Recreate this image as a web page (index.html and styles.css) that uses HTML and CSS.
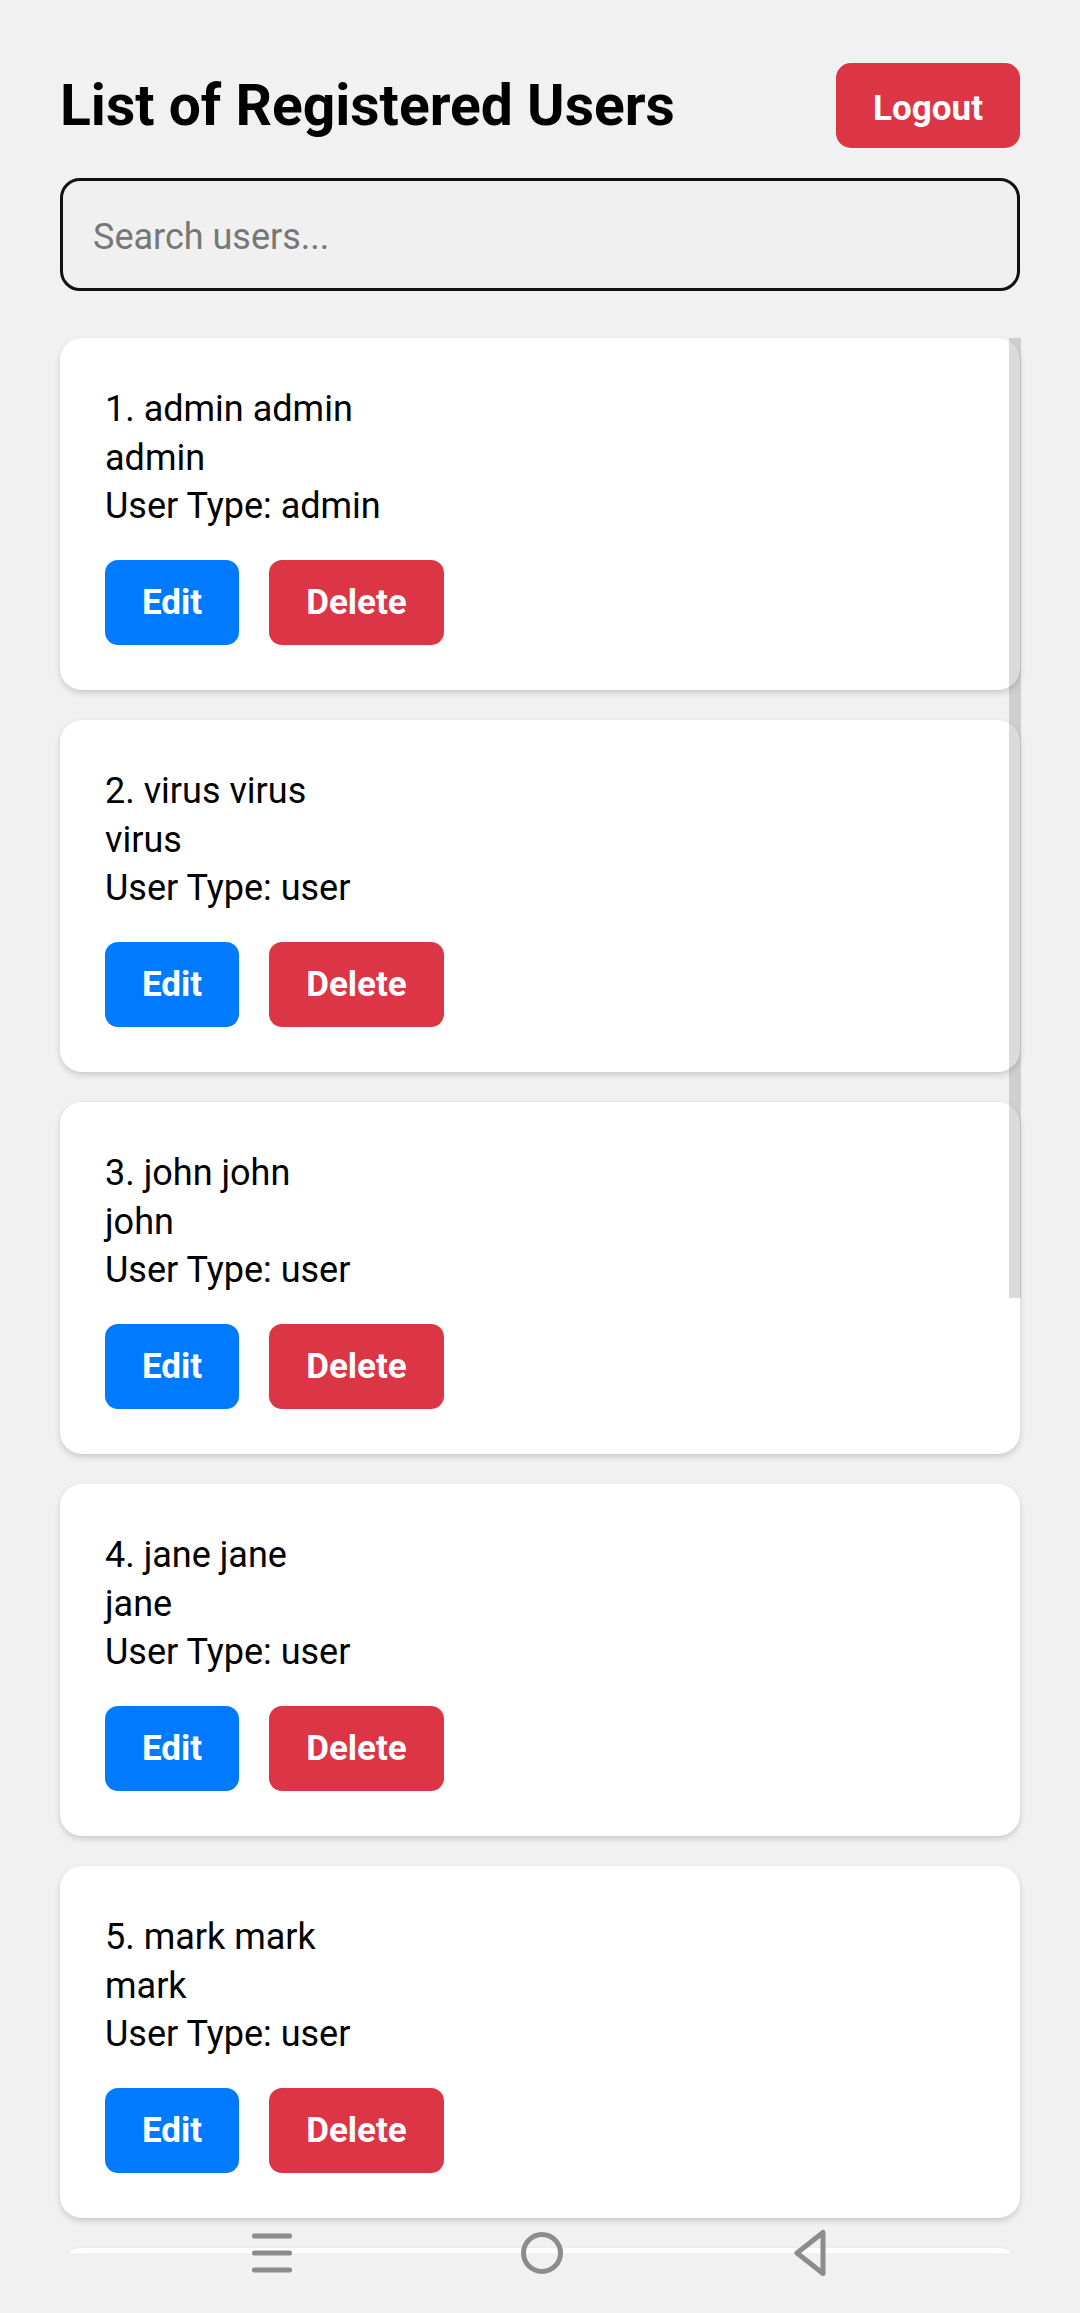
FILE: index.html
```html
<!DOCTYPE html>
<html lang="en">
<head>
<meta charset="utf-8">
<title>List of Registered Users</title>
<link rel="stylesheet" href="styles.css">
</head>
<body>
<div class="page">
  <header class="header">
    <h1 class="title">List of Registered Users</h1>
    <button class="btn btn-danger btn-logout">Logout</button>
  </header>
  <div class="search">
    <input class="search-input" type="text" placeholder="Search users...">
  </div>
  <div class="list-wrap">
    <div class="list">
      <div class="card">
        <div class="line">1. admin admin</div>
        <div class="line">admin</div>
        <div class="line">User Type: admin</div>
        <div class="actions"><button class="btn btn-primary">Edit</button><button class="btn btn-danger">Delete</button></div>
      </div>
      <div class="card">
        <div class="line">2. virus virus</div>
        <div class="line">virus</div>
        <div class="line">User Type: user</div>
        <div class="actions"><button class="btn btn-primary">Edit</button><button class="btn btn-danger">Delete</button></div>
      </div>
      <div class="card">
        <div class="line">3. john john</div>
        <div class="line">john</div>
        <div class="line">User Type: user</div>
        <div class="actions"><button class="btn btn-primary">Edit</button><button class="btn btn-danger">Delete</button></div>
      </div>
      <div class="card">
        <div class="line">4. jane jane</div>
        <div class="line">jane</div>
        <div class="line">User Type: user</div>
        <div class="actions"><button class="btn btn-primary">Edit</button><button class="btn btn-danger">Delete</button></div>
      </div>
      <div class="card">
        <div class="line">5. mark mark</div>
        <div class="line">mark</div>
        <div class="line">User Type: user</div>
        <div class="actions"><button class="btn btn-primary">Edit</button><button class="btn btn-danger">Delete</button></div>
      </div>
      <div class="card card-peek" aria-hidden="true"></div>
    </div>
    <div class="scroll-thumb"></div>
  </div>
</div>
<nav class="sysnav">
  <svg class="nav-icon" width="44" height="44" viewBox="0 0 44 44">
    <rect x="2" y="2.5" width="40" height="5" rx="2" fill="#8c8c8c"/>
    <rect x="2" y="19.5" width="40" height="5" rx="2" fill="#8c8c8c"/>
    <rect x="2" y="36.5" width="40" height="5" rx="2" fill="#8c8c8c"/>
  </svg>
  <svg class="nav-icon" width="46" height="46" viewBox="0 0 46 46">
    <circle cx="23" cy="23" r="18.5" fill="none" stroke="#8c8c8c" stroke-width="5"/>
  </svg>
  <svg class="nav-icon" width="40" height="48" viewBox="0 0 40 48">
    <path d="M33 3.5 L33 44.5 L7 24 Z" fill="none" stroke="#8c8c8c" stroke-width="5" stroke-linejoin="round"/>
  </svg>
</nav>
</body>
</html>
```

FILE: styles.css
```css
html, body {
  margin: 0;
  padding: 0;
}

body {
  background: #f1f1f1;
  font-family: Roboto, "Noto Sans", "Liberation Sans", sans-serif;
  color: #000;
  width: 1080px;
  height: 2313px;
  overflow: hidden;
  position: relative;
}

.page {
  padding: 63px 60px 0 60px;
}

.header {
  display: flex;
  justify-content: space-between;
  align-items: center;
}

.title {
  margin: 0;
  font-size: 57px;
  font-weight: 700;
  line-height: 68px;
  letter-spacing: 0;
}

.btn {
  border: none;
  color: #fff;
  font-family: Roboto, "Noto Sans", "Liberation Sans", sans-serif;
  font-size: 35px;
  font-weight: 700;
  height: 85px;
  padding: 0 37px;
  border-radius: 13px;
  line-height: 85px;
  cursor: pointer;
}

.btn-danger {
  background: #dc3545;
}

.btn-primary {
  background: #007bff;
}

.btn-logout {
  padding: 0 37px;
  border-radius: 15px;
  padding-top: 3px;
}

.search {
  margin-top: 30px;
}

.search-input {
  display: block;
  width: 100%;
  box-sizing: border-box;
  height: 113px;
  border: 3px solid #111;
  border-radius: 20px;
  background: #f0f0f0;
  padding: 4px 30px 0 30px;
  font-family: Roboto, "Noto Sans", "Liberation Sans", sans-serif;
  font-size: 36px;
  color: #000;
  outline: none;
}

.search-input::placeholder {
  color: #777;
}

.list-wrap {
  position: relative;
  margin-top: 47px;
}

.list {
  display: flex;
  flex-direction: column;
  gap: 30.5px;
}

.card {
  background: #fff;
  border-radius: 22px;
  padding: 47px 45px 45px 45px;
  box-shadow: 0 3px 6px rgba(0, 0, 0, 0.16);
}

.card-peek {
  height: 300px;
  padding: 0;
}

.line {
  font-size: 36px;
  line-height: 48.5px;
  color: #000;
}

.actions {
  display: flex;
  gap: 30px;
  margin-top: 29px;
}

.scroll-thumb {
  position: absolute;
  top: 0;
  right: -1px;
  width: 12px;
  height: 960px;
  background: rgba(0, 0, 0, 0.14);
}

.sysnav {
  position: absolute;
  left: 0;
  right: 0;
  top: 2225px;
  height: 88px;
  background: linear-gradient(to bottom, transparent 0, transparent 28px, #f1f1f1 28px);
  display: flex;
  justify-content: center;
  align-items: center;
  gap: 225px;
  padding-bottom: 32px;
  box-sizing: border-box;
}

.nav-icon {
  display: block;
}
```
